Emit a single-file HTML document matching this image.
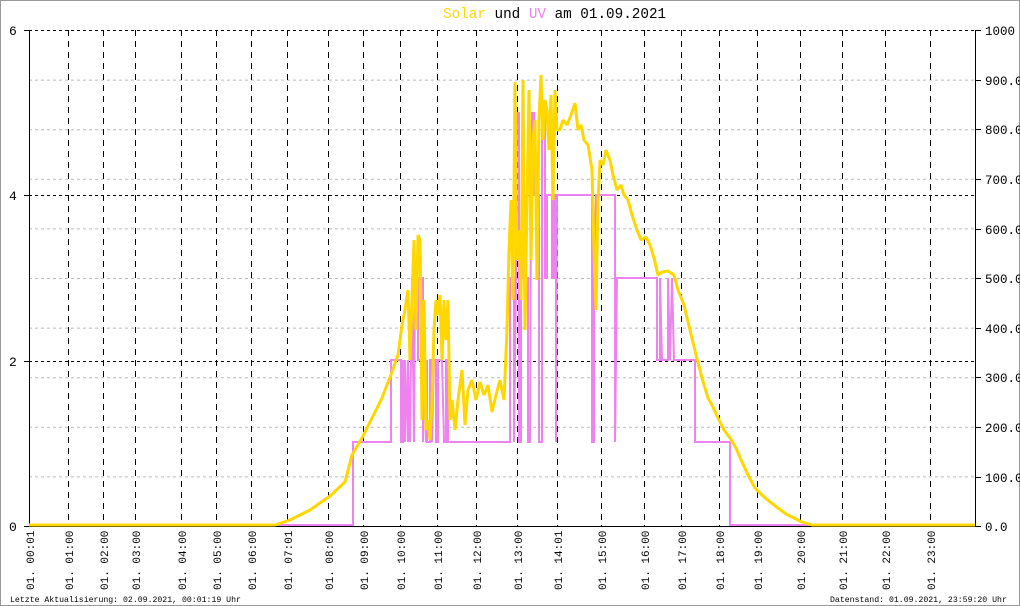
<!DOCTYPE html>
<html><head><meta charset="utf-8"><style>
html,body{margin:0;padding:0;background:#fff}
svg{display:block}
text{font-family:"Liberation Mono","DejaVu Sans Mono",monospace}
</style></head><body>
<svg width="1020" height="606" viewBox="0 0 1020 606" xmlns="http://www.w3.org/2000/svg">
<rect x="0.5" y="0.5" width="1019" height="605" fill="#fff" stroke="#999"/>
<text x="443" y="18" font-size="14.3" fill="#ffd700">Solar<tspan fill="#000"> und </tspan><tspan fill="#ee82ee">UV</tspan><tspan fill="#000"> am 01.09.2021</tspan></text>
<g stroke="#bbb" stroke-dasharray="3,3" stroke-width="1">
<line x1="29" x2="975" y1="80.1" y2="80.1"/><line x1="29" x2="975" y1="129.7" y2="129.7"/>
<line x1="29" x2="975" y1="179.3" y2="179.3"/><line x1="29" x2="975" y1="228.9" y2="228.9"/>
<line x1="29" x2="975" y1="278.5" y2="278.5"/><line x1="29" x2="975" y1="328.1" y2="328.1"/>
<line x1="29" x2="975" y1="377.7" y2="377.7"/><line x1="29" x2="975" y1="427.3" y2="427.3"/>
<line x1="29" x2="975" y1="476.9" y2="476.9"/>
</g>
<g stroke="#000" stroke-dasharray="3,3" stroke-width="1">
<line x1="29" x2="975" y1="30.5" y2="30.5"/><line x1="29" x2="975" y1="195.5" y2="195.5"/><line x1="29" x2="975" y1="361.5" y2="361.5"/>
</g>
<g stroke="#000" stroke-dasharray="6,5" stroke-width="1">
<line x1="68.5" x2="68.5" y1="30" y2="526"/><line x1="103.5" x2="103.5" y1="30" y2="526"/>
<line x1="135.5" x2="135.5" y1="30" y2="526"/><line x1="181.5" x2="181.5" y1="30" y2="526"/>
<line x1="216.5" x2="216.5" y1="30" y2="526"/><line x1="251.5" x2="251.5" y1="30" y2="526"/>
<line x1="287.5" x2="287.5" y1="30" y2="526"/><line x1="328.5" x2="328.5" y1="30" y2="526"/>
<line x1="363.5" x2="363.5" y1="30" y2="526"/><line x1="400.5" x2="400.5" y1="30" y2="526"/>
<line x1="437.5" x2="437.5" y1="30" y2="526"/><line x1="476.5" x2="476.5" y1="30" y2="526"/>
<line x1="517.5" x2="517.5" y1="30" y2="526"/><line x1="557.5" x2="557.5" y1="30" y2="526"/>
<line x1="601.5" x2="601.5" y1="30" y2="526"/><line x1="644.5" x2="644.5" y1="30" y2="526"/>
<line x1="681.5" x2="681.5" y1="30" y2="526"/><line x1="719.5" x2="719.5" y1="30" y2="526"/>
<line x1="757.5" x2="757.5" y1="30" y2="526"/><line x1="800.5" x2="800.5" y1="30" y2="526"/>
<line x1="842.5" x2="842.5" y1="30" y2="526"/><line x1="885.5" x2="885.5" y1="30" y2="526"/>
<line x1="930.5" x2="930.5" y1="30" y2="526"/>
</g>
<g stroke="#000" stroke-width="1">
<line x1="29.5" x2="29.5" y1="30" y2="527"/><line x1="975.5" x2="975.5" y1="30" y2="527"/>
<line x1="29" x2="976" y1="526.5" y2="526.5"/>
<line x1="24" x2="29" y1="30.5" y2="30.5"/><line x1="24" x2="29" y1="195.5" y2="195.5"/>
<line x1="24" x2="29" y1="361.5" y2="361.5"/><line x1="24" x2="29" y1="526.5" y2="526.5"/>
<line x1="975" x2="981" y1="30.5" y2="30.5"/><line x1="975" x2="981" y1="80.5" y2="80.5"/>
<line x1="975" x2="981" y1="129.5" y2="129.5"/><line x1="975" x2="981" y1="179.5" y2="179.5"/>
<line x1="975" x2="981" y1="229.5" y2="229.5"/><line x1="975" x2="981" y1="278.5" y2="278.5"/>
<line x1="975" x2="981" y1="328.5" y2="328.5"/><line x1="975" x2="981" y1="377.5" y2="377.5"/>
<line x1="975" x2="981" y1="427.5" y2="427.5"/><line x1="975" x2="981" y1="477.5" y2="477.5"/>
<line x1="975" x2="981" y1="526.5" y2="526.5"/>
</g>
<g font-size="13" fill="#000">
<text x="9" y="35">6</text><text x="9" y="200">4</text><text x="9" y="366">2</text><text x="9" y="531">0</text>
<g font-size="12.5"><text x="985" y="35">1000</text><text x="985" y="85">900.0</text><text x="985" y="134">800.0</text>
<text x="985" y="184">700.0</text><text x="985" y="234">600.0</text><text x="985" y="283">500.0</text>
<text x="985" y="333">400.0</text><text x="985" y="382">300.0</text><text x="985" y="432">200.0</text>
<text x="985" y="482">100.0</text><text x="985" y="531">0.0</text></g>
</g>
<polyline fill="none" stroke="#ee82ee" stroke-width="2" points="29,525 353,525 353,442 391,442 391,360 401,360 401,442 403,442 403,360 405,442 405,360 408,442 408,360 410,442 411,360 412,278 414,442 415,278 418,278 418,360 421,360 421,278 423,278 423,442 424,360 426,442 427,360 427,442 430,442 430,360 432,360 432,442 434,360 436,360 436,442 438,442 438,360 442,360 444,442 446,442 446,360 448,360 448,442 510,442 510,278 514,278 514,442 516,278 517,113 519,113 519,442 521,442 521,278 523,278 523,195 526,195 526,278 528,278 528,442 530,442 531,195 532,195 532,113 534,113 534,195 539,195 539,442 542,442 542,113 545,113 545,278 547,278 547,195 552,195 552,278 554,278 554,195 556,195 556,442 557,195 592,195 592,442 594,442 594,278 596,195 615,195 615,442 617,278 657,278 657,360 660,360 660,278 662,360 668,360 668,278 670,360 672,278 674,360 695,360 695,442 697,442 730,442 730,525 975,525"/>
<polyline fill="none" stroke="#ffd700" stroke-width="3" stroke-linejoin="bevel" points="29,525 275,525 290,520 310,510 330,496 345,482 352,455 362,438 372,418 382,398 392,372 398,355 402,325 405,310 408,290 410,360 412,300 414,240 416,330 418,235 420,240 422,420 424,300 426,430 428,420 430,440 432,400 434,330 436,300 438,315 440,295 442,360 444,300 446,340 448,300 450,420 452,400 455,430 458,400 462,370 465,425 468,390 472,380 476,400 480,382 484,395 488,385 492,412 496,395 500,380 504,400 507,330 509,250 511,200 513,300 515,82 517,260 519,230 521,300 523,80 525,330 527,200 529,90 531,260 533,140 535,120 537,280 539,120 541,75 543,140 545,100 547,110 549,150 551,95 553,200 555,90 557,130 560,130 563,120 567,125 571,115 575,103 578,130 581,125 584,140 588,145 592,170 594,250 596,310 598,200 600,160 603,165 606,150 610,160 613,175 617,190 621,185 624,195 628,200 632,215 637,230 641,240 646,237 650,245 654,258 658,275 662,272 668,271 674,275 678,290 684,305 690,330 696,355 702,378 708,398 712,405 718,418 724,430 730,438 736,448 742,462 748,475 755,488 762,495 770,502 778,508 786,514 794,518 802,522 812,525 975,525"/>
<g font-size="11" fill="#000">
<text transform="translate(34,590) rotate(-90)">01. 00:01</text>
<text transform="translate(73,590) rotate(-90)">01. 01:00</text>
<text transform="translate(108,590) rotate(-90)">01. 02:00</text>
<text transform="translate(140,590) rotate(-90)">01. 03:00</text>
<text transform="translate(186,590) rotate(-90)">01. 04:00</text>
<text transform="translate(221,590) rotate(-90)">01. 05:00</text>
<text transform="translate(256,590) rotate(-90)">01. 06:00</text>
<text transform="translate(292,590) rotate(-90)">01. 07:01</text>
<text transform="translate(333,590) rotate(-90)">01. 08:00</text>
<text transform="translate(368,590) rotate(-90)">01. 09:00</text>
<text transform="translate(405,590) rotate(-90)">01. 10:00</text>
<text transform="translate(442,590) rotate(-90)">01. 11:00</text>
<text transform="translate(481,590) rotate(-90)">01. 12:00</text>
<text transform="translate(522,590) rotate(-90)">01. 13:00</text>
<text transform="translate(562,590) rotate(-90)">01. 14:01</text>
<text transform="translate(606,590) rotate(-90)">01. 15:00</text>
<text transform="translate(649,590) rotate(-90)">01. 16:00</text>
<text transform="translate(686,590) rotate(-90)">01. 17:00</text>
<text transform="translate(724,590) rotate(-90)">01. 18:00</text>
<text transform="translate(762,590) rotate(-90)">01. 19:00</text>
<text transform="translate(805,590) rotate(-90)">01. 20:00</text>
<text transform="translate(847,590) rotate(-90)">01. 21:00</text>
<text transform="translate(890,590) rotate(-90)">01. 22:00</text>
<text transform="translate(935,590) rotate(-90)">01. 23:00</text>
</g>
<g font-size="8.2" fill="#000">
<text x="10" y="602">Letzte Aktualisierung: 02.09.2021, 00:01:19 Uhr</text>
<text x="830" y="602">Datenstand: 01.09.2021, 23:59:20 Uhr</text>
</g>
</svg>
</body></html>
